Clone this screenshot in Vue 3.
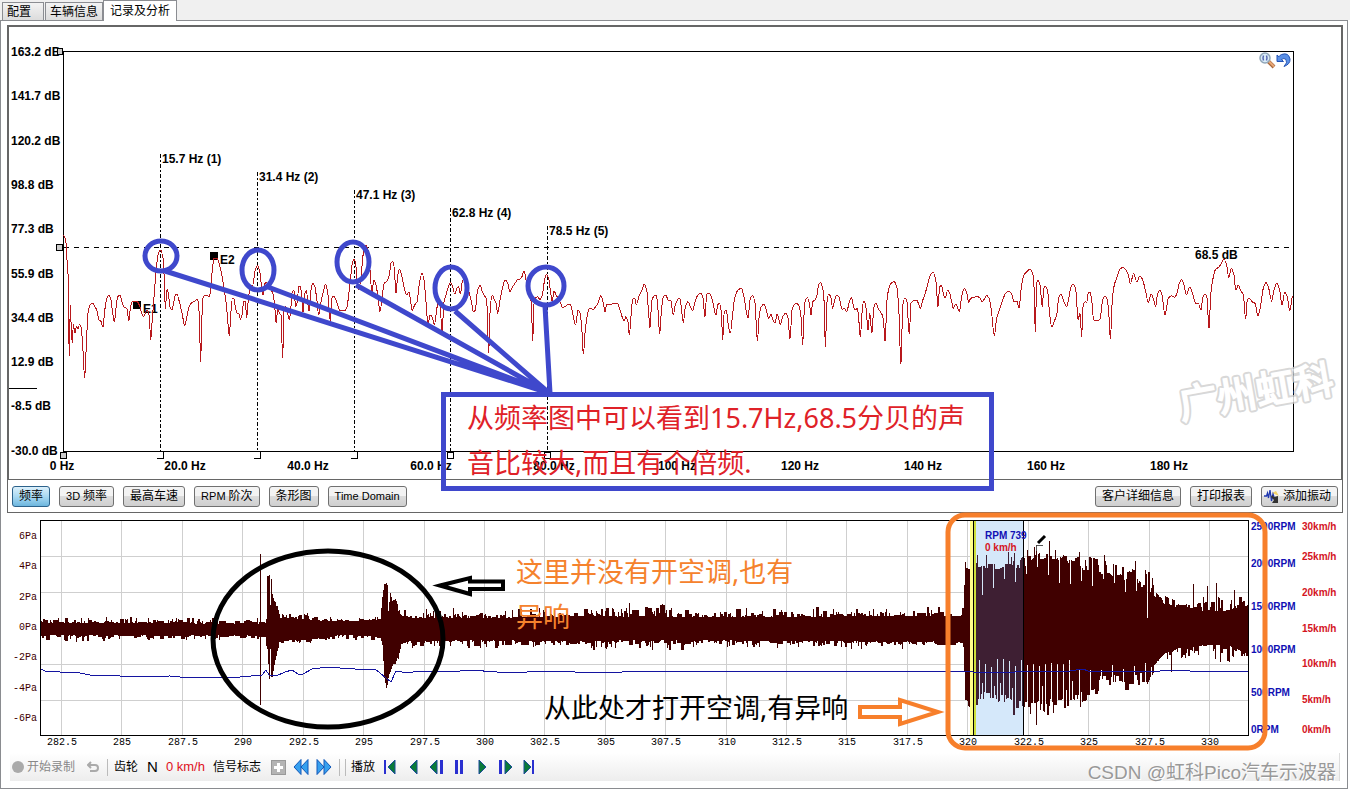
<script setup>
import { ref } from 'vue'

const tabs = ['配置', '车辆信息', '记录及分析']
const activeTab = ref(2)

const modes = [
  [{ t: '频率' }],
  [{ t: '3D', latin: true }, { t: '频率' }],
  [{ t: '最高车速' }],
  [{ t: 'RPM', latin: true }, { t: '阶次' }],
  [{ t: '条形图' }],
  [{ t: 'Time Domain', latin: true }],
]
const activeMode = ref(0)

const dbLabels = ['163.2', '141.7', '120.2', '98.8', '77.3', '55.9', '34.4', '12.9', '-8.5', '-30.0']
  .map((v, i) => ({ text: v + ' dB', y: Math.round(56 + i * 44.3) }))
const hzLabels = ['0', '20.0', '40.0', '60.0', '80.0', '100', '120', '140', '160', '180']
  .map((v, i) => ({ text: v + ' Hz', x: 62 + i * 123 }))
const harmonics = [
  { x: 160, y: 154, text: '15.7 Hz (1)' },
  { x: 257, y: 172, text: '31.4 Hz (2)' },
  { x: 354, y: 190, text: '47.1 Hz (3)' },
  { x: 450, y: 208, text: '62.8 Hz (4)' },
  { x: 547, y: 226, text: '78.5 Hz (5)' },
]

/* Spectrum samples: each block has an origin, samples are in thirds of a unit. */
const spectrum = [
  { x: 0, y: 230, d: '190,15 197,30 201,90 205,150 206,280 208,380 211,225 214,300 217,340 220,283 225,310 229,290 234,297 238,284 243,292 248,345 254,443 259,345 264,250 270,225 277,219 285,230 291,243 297,270 303,274 309,292 313,255 318,215 326,196 332,205 337,240 343,275 348,235 353,200 360,196 366,215 373,233 380,235 387,272 391,235 397,215 410,213 418,225 424,245 430,260 436,250 443,240 448,260 452,329 457,265 463,190 468,125 475,72 482,60 489,85 493,150 496,236 501,178 505,190 510,230 515,240 520,225 526,195 531,193 538,215 544,240 550,270 554,288 560,262 567,232 575,218 583,215 592,208 596,225 599,300 602,395 605,280 609,205 616,195 628,200 632,180 637,120 642,85 650,85 660,110 668,150 676,200 682,255 688,317 692,255 697,205 702,205 706,230 712,250 717,250 721,268 727,250 731,213 736,215 740,262 745,210 752,165 758,165 766,120 773,105 780,130 784,165 789,195 795,160 800,158 808,170 820,195 825,240 828,280 834,230 838,250 843,255 848,385 852,240 857,228 862,245 868,270 872,240 877,185 882,182 887,230 892,215 896,170 901,168 905,200 909,250 914,190 919,182 927,245 933,180 938,160 944,168 950,205 956,255 963,215 970,185 977,163 984,195 991,275 996,205 1001,198 1008,210 1018,240' },
  { x: 340, y: 220, d: '0,272 12,272 20,265 25,235 30,190 37,130 42,118 47,130 50,170 56,210 63,170 70,100 78,75 84,90 90,150 96,220 101,180 108,195 115,240 120,275 127,225 133,190 140,185 148,165 153,130 158,125 163,145 168,222 173,165 179,148 186,170 193,205 200,225 207,215 212,245 216,272 224,255 231,245 239,185 246,160 252,180 258,245 264,315 270,285 276,290 283,315 290,270 295,240 300,250 306,335 312,245 318,225 325,200 332,187 338,200 344,222 351,205 356,200 361,222 367,185 373,175 380,200 388,220 395,250 400,275 406,270 412,215 421,196 427,215 434,228 440,240 446,400 451,260 457,225 463,240 468,250 473,280 480,240 487,205 496,180 503,190 510,215 518,200 525,190 532,180 538,178 545,172 552,152 557,175 562,210 568,230 574,245 578,362 583,240 592,230 600,238 607,225 613,185 619,163 626,175 632,220 637,245 642,212 648,225 658,240 668,262 676,260 684,252 692,255 699,285 707,315 714,270 720,278 725,320 730,403 736,330 744,275 750,265 760,268 768,258 774,250 782,227 790,250 795,275 800,254 815,252 833,250 840,270 848,295 853,303 857,290 864,305 868,345 873,290 878,238 884,235 889,255 894,240 898,225 904,215 913,193 920,210 925,265 930,325 935,245 942,228 949,225 954,270 959,343 964,275 970,232 977,225 985,240 992,240 1000,285 1007,250 1018,235' },
  { x: 680, y: 220, d: '0,235 5,275 10,307 16,262 24,245 31,260 38,272 45,245 52,228 62,220 69,235 75,292 80,222 89,220 97,240 102,265 108,285 113,255 118,250 124,275 128,360 133,275 139,272 145,315 151,340 157,290 164,235 174,210 184,205 192,230 198,270 204,295 210,240 218,226 225,250 232,363 238,285 244,260 251,253 259,270 266,295 273,283 279,300 285,310 291,283 296,295 301,314 308,290 317,280 324,295 330,358 336,270 342,255 350,250 358,260 363,290 368,375 374,250 382,233 388,248 393,285 398,245 405,240 410,230 416,195 422,187 428,205 433,255 436,382 441,245 446,222 452,230 458,265 463,245 470,225 477,230 486,268 493,265 500,275 507,250 514,232 520,255 525,270 532,265 536,295 541,352 546,280 551,243 556,250 560,285 564,333 569,280 576,340 581,265 588,250 596,268 607,285 611,310 615,367 621,240 628,200 635,188 642,185 650,200 656,260 663,436 668,260 674,235 680,240 688,343 693,250 700,243 710,240 715,250 721,265 727,245 737,215 748,175 754,160 760,157 768,185 774,262 779,200 784,197 789,215 795,235 803,211 809,220 815,245 820,265 828,252 838,275 845,230 853,205 861,222 866,247 872,235 890,230 898,232 906,245 914,235 920,226 927,235 934,270 943,348 950,295 960,265 970,235 978,218 987,213' },
  { x: 1010, y: 220, d: '6,225 12,245 21,243 27,265 33,210 40,170 50,155 60,148 68,160 72,200 76,337 80,190 84,180 90,195 97,262 101,205 107,199 113,215 119,285 126,322 132,305 140,285 147,230 153,223 160,240 170,260 177,230 184,198 191,193 198,215 204,300 210,280 215,350 219,260 226,245 230,248 235,220 240,217 245,240 251,300 262,301 270,298 278,240 285,229 292,240 297,290 301,358 307,240 313,195 320,175 330,148 338,142 348,150 355,165 361,192 371,160 380,185 390,168 398,180 407,215 415,248 423,223 430,235 437,260 443,220 449,211 456,225 465,284 475,235 484,227 494,232 501,220 508,190 515,178 522,195 529,225 539,202 547,218 557,250 565,250 573,270 578,235 585,222 591,235 597,328 602,225 608,180 616,150 628,140 642,118 650,135 656,172 664,145 672,165 677,210 685,196 691,210 700,225 707,298 712,240 718,235 726,245 735,250 744,287 752,255 760,205 768,188 776,205 785,244 792,210 801,190 809,210 816,255 824,217 832,230 839,272 848,228' },
]
/* Monotone cubic through the samples: flat tangents on peaks and troughs. */
const spectrumPath = (() => {
  const pts = spectrum.flatMap(b => b.d.split(' ').map(p => {
    const [x, y] = p.split(',').map(Number)
    return [b.x + x / 3, b.y + y / 3]
  }))
  const slope = i => (pts[i + 1][1] - pts[i][1]) / (pts[i + 1][0] - pts[i][0])
  const tangent = pts.map((_, i) => {
    if (i === 0 || i === pts.length - 1) return 0
    const a = slope(i - 1)
    const b = slope(i)
    return a * b <= 0 ? 0 : (2 * a * b) / (a + b)
  })
  let d = `M${pts[0][0].toFixed(1)} ${pts[0][1].toFixed(1)}`
  for (let i = 1; i < pts.length; i++) {
    const [x0, y0] = pts[i - 1]
    const [x1, y1] = pts[i]
    const h = (x1 - x0) / 3
    d += `C${[x0 + h, y0 + tangent[i - 1] * h, x1 - h, y1 - tangent[i] * h, x1, y1].map(n => n.toFixed(1)).join(' ')}`
  }
  return d
})()

const paLabels = [6, 4, 2, 0, -2, -4, -6].map((v, i) => ({ text: v + 'Pa', y: Math.round(539 + i * 30.3) }))
const timeTicks = Array.from({ length: 20 }, (_, i) => ({ text: String(282.5 + i * 2.5), x: Math.round(61 + i * 60.42) }))
const rpmLabels = [['2500', 530], ['2000', 567], ['1500', 610], ['1000', 653], ['500', 696], ['0', 733]]
const speedLabels = [['30', 530], ['25', 560], ['20', 596], ['15', 632], ['10', 667], ['5', 703], ['0', 733]]

/* Envelope keys: x, top, bottom, jitter top, jitter bottom */
const envelope = [
  [41, 621, 636, 5, 4], [90, 621, 636, 6, 6], [130, 621, 636, 5, 4], [258, 622, 636, 5, 4], [265, 622, 637, 3, 3],
  [266, 618, 646, 2, 2], [267, 576, 648, 1, 1], [269, 575, 678, 1, 2], [270, 606, 648, 1, 1], [271, 580, 677, 1, 2], [272, 594, 676, 1, 3],
  [274, 600, 664, 3, 3], [277, 607, 651, 3, 2], [279, 616, 641, 4, 3],
  [305, 617, 640, 6, 5], [320, 619, 638, 5, 4], [345, 620, 635, 4, 4], [380, 619, 637, 3, 3], [382, 597, 645, 1, 2],
  [384, 583, 678, 2, 4], [387, 584, 686, 3, 4], [388, 610, 678, 2, 3], [390, 592, 670, 4, 2], [392, 600, 664, 4, 3], [395, 598, 664, 4, 4],
  [398, 610, 655, 5, 3], [401, 614, 644, 4, 3], [410, 615, 642, 8, 6], [500, 615, 642, 7, 7], [600, 613, 643, 8, 7],
  [616, 611, 644, 14, 13], [645, 612, 644, 14, 11], [690, 614, 642, 8, 7], [963, 613, 643, 8, 6],
  [965, 566, 698, 6, 6], [972, 568, 704, 6, 8],
  [976, 564, 698, 10, 20], [1000, 564, 700, 14, 20], [1023, 562, 708, 14, 20], [1036, 555, 707, 14, 18], [1046, 553, 704, 12, 16],
  [1062, 556, 702, 12, 14], [1080, 563, 697, 16, 14], [1096, 566, 692, 14, 12], [1100, 567, 679, 16, 12], [1122, 574, 678, 14, 14], [1147, 581, 678, 20, 18],
  [1153, 590, 668, 18, 14], [1165, 599, 658, 14, 18], [1180, 605, 653, 8, 16], [1195, 605, 651, 14, 14], [1207, 604, 651, 18, 18], [1225, 606, 649, 14, 16], [1248, 602, 658, 10, 14],
]
let seed = 7
const rnd = () => {
  seed = (seed * 16807) % 2147483647
  return seed / 2147483647
}
const waveColumns = (() => {
  const out = []
  let k = 0
  let up = 0
  let down = 0
  for (let x = 41; x < 1248; x++) {
    while (k < envelope.length - 2 && x >= envelope[k + 1][0]) k++
    const a = envelope[k]
    const b = envelope[k + 1]
    const t = (x - a[0]) / (b[0] - a[0])
    const mix = i => a[i] + (b[i] - a[i]) * t
    if (rnd() > 0.45) up = 0.4 - rnd() * rnd() * 1.4
    if (rnd() > 0.45) down = rnd() * rnd() * 1.4 - 0.4
    let top = mix(1) + up * mix(3)
    let bottom = mix(2) + down * mix(4) + 1
    if (x > 978 && x < 1074 && x % 6 === 1) bottom = 658 + rnd() * 10
    if (x > 978 && x < 1074 && x % 6 === 4 && rnd() > 0.5) bottom = 680 + rnd() * 12
    if (x > 1078 && x < 1150 && x % 11 === 1) bottom = 662 + rnd() * 8
    if (x > 976 && x < 1156 && x % 11 === 3) top += 10 + rnd() * 20
    out.push({ x, top: Math.round(top), bottom: Math.round(bottom) })
  }
  return out
})()
const columnsPath = list => list.map(c => `M${c.x + 0.5} ${c.top}V${c.bottom}`).join('')
const wavePath = columnsPath(waveColumns.filter(c => c.x < 970 || c.x > 1023)) + 'M260 554V705M1049.5 541V600M1036.5 545V600M1055.5 550V600M1135.5 561V600M1149.5 572V600M1193.5 584V620M1207.5 586V620M1216.5 583V620M1234.5 590V620M386.5 583V688M971.5 566V700'
const selectedPath = columnsPath(waveColumns.filter(c => c.x >= 976 && c.x <= 1022)) + 'M1008.5 552V600M1014.5 553V600M986.5 555V600'

const rpmLine = '41,669 45,671 60,672 70,672 80,673 90,675 110,675 130,677 170,676 180,677 240,677 262,675 266,670 269,675 276,676 285,672 292,670 298,674 303,674 312,669 320,668 330,667 340,668 370,670 375,669 391,682 396,671 408,673 418,671 450,672 470,670 510,673 545,671 605,673 640,671 680,671 735,672 755,671 785,671 840,671 970,671 976,673 985,672 1000,673 1030,671 1070,671 1083,669 1088,671 1160,671 1180,670 1190,671 1249,671'

const transport = [
  { label: '跳到开头', bars: [2], tri: '13,2 6,9 13,16' },
  { label: '倒放', bars: [], tri: '12,2 5,9 12,16' },
  { label: '后退一步', bars: [12], tri: '9,2 2,9 9,16' },
  { label: '暂停', bars: [4, 9], tri: '' },
  { label: '正放', bars: [], tri: '5,2 12,9 5,16' },
  { label: '前进一步', bars: [2], tri: '8,2 15,9 8,16' },
  { label: '跳到末尾', bars: [12], tri: '4,2 11,9 4,16' },
]
</script>

<template>
  <div class="app">
    <nav class="tabs" role="tablist">
      <button v-for="(t, i) in tabs" :key="t" role="tab" class="tab" :class="{ active: i === activeTab }"
        :aria-selected="i === activeTab" @click="activeTab = i">{{ t }}</button>
    </nav>

    <main class="page">
      <section class="panel">
        <div class="chart-frame">
          <svg class="chart freq" viewBox="9 27 1332 452">
            <g class="axis">
              <text v-for="l in dbLabels" :key="l.text" x="11" :y="l.y">{{ l.text }}</text>
              <text v-for="l in hzLabels" :key="l.text" :x="l.x" y="470" text-anchor="middle">{{ l.text }}</text>
              <text v-for="h in harmonics" :key="h.text" :x="h.x + 2" :y="h.y + 9">{{ h.text }}</text>
            </g>
            <g class="crisp">
              <rect x="63.5" y="51.5" width="1230" height="400" fill="none" stroke="#000" />
              <path d="M9 388.5H37" stroke="#000" />
              <path d="M64 247.5H1289" stroke="#000" stroke-dasharray="5 5" />
              <path v-for="h in harmonics" :key="h.x" :d="`M${h.x + 0.5} ${h.y}V451`" stroke="#000" stroke-dasharray="4 2 2 2" />
              <path v-for="h in harmonics.slice(0, 3)" :key="h.x" :d="`M${h.x - 3} 458.5H${h.x + 3.5}V452`" fill="none" stroke="#000" />
              <rect v-for="h in harmonics.slice(3)" :key="h.x" :x="h.x - 2.5" y="452.5" width="6" height="6" fill="#fff" stroke="#000" />
              <rect x="57.5" y="48.5" width="5" height="6" fill="#ccc" stroke="#000" />
              <rect x="56.5" y="244.5" width="6" height="6" fill="#ccc" stroke="#000" />
              <rect x="60.5" y="452.5" width="6" height="6" fill="#ccc" stroke="#000" />
              <rect x="133" y="301" width="8" height="8" />
              <rect x="210" y="252" width="8" height="8" />
            </g>
            <g class="axis">
              <text x="143" y="313">E1</text>
              <text x="220" y="264">E2</text>
              <text x="1195" y="259">68.5 dB</text>
            </g>
            <path class="spectrum crisp" :d="spectrumPath" />
            <g class="brand" transform="rotate(-10 1256 392)">
              <text class="brand-edge" x="1178" y="406">广州虹科</text>
              <text class="brand-fill" x="1178" y="406">广州虹科</text>
            </g>
            <g class="note-blue">
              <ellipse cx="161" cy="256" rx="16" ry="15" />
              <ellipse cx="258" cy="270" rx="16" ry="20" />
              <ellipse cx="353" cy="262" rx="16" ry="20" />
              <ellipse cx="451" cy="288" rx="16" ry="21" />
              <ellipse cx="546" cy="286" rx="18" ry="19" />
              <path d="M165 271L549 393M268 287L549 393M356 285L549 393M455 311L549 393M545 306L550 393" />
              <rect x="443.5" y="394.5" width="548" height="94" />
            </g>
            <g class="note red">
              <text x="467" y="428">从频率图中可以看到15.7Hz,68.5分贝的声</text>
              <text x="467" y="473">音比较大,而且有个倍频.</text>
            </g>
          </svg>
          <div class="chart-tools">
            <button class="icon-btn" aria-label="缩放">
              <svg width="17" height="17" viewBox="0 0 17 17">
                <path d="M9.500 9.500L15 15" stroke="#a9673c" stroke-width="4" />
                <path d="M9.500 9L15 14.500" stroke="#e8a877" stroke-width="2" />
                <circle cx="6" cy="6" r="5" fill="#d9ecf8" stroke="#8fa5b8" stroke-width="1.500" />
                <path d="M4.500 3.500Q3.500 6 4.500 8.500M7.500 3.500Q8.500 6 7.500 8.500" fill="none" stroke="#5868b0" stroke-width="1.500" />
              </svg>
            </button>
            <button class="icon-btn" aria-label="撤销">
              <svg width="15" height="17" viewBox="0 0 15 17">
                <path d="M1 3V9.500H7.500L5.500 7.500Q8 5.500 10 7.500Q12 10.500 8 14.500Q14.500 12 14 7Q12.500 0 5.500 2.500Q4 3 3 4.800Z" fill="#5a8fe6" stroke="#2453b4" />
              </svg>
            </button>
          </div>
        </div>
        <div class="mode-row">
          <div class="group">
            <button v-for="(m, i) in modes" :key="i" class="btn" :class="{ on: i === activeMode }" @click="activeMode = i">
              <span v-for="p in m" :key="p.t" :class="{ latin: p.latin }">{{ p.t }}</span>
            </button>
          </div>
          <div class="group">
            <button class="btn">客户详细信息</button>
            <button class="btn">打印报表</button>
            <button class="btn add">
              <svg width="16" height="15" viewBox="0 0 16 15">
                <path d="M8 4L12 2L15 7Z" fill="#f3d36a" />
                <path d="M0 7H2.500L3.500 4L4.500 9L6 1L7.500 12L9 5L10 8" fill="none" stroke="#2038b0" stroke-width="1.300" />
                <path d="M8 6L10 8L14 7V14H8L10 11L7 8Z" fill="#333" />
              </svg>
              <span>添加振动</span>
            </button>
          </div>
        </div>
      </section>

      <svg class="chart time" viewBox="7 513 1336 237">
        <g class="crisp">
          <path v-for="t in timeTicks" :key="t.x" :d="`M${t.x + 0.5} 521V735`" stroke="#cfcfcf" />
          <path d="M41 556.500H1248M41 592.500H1248M41 628.500H1248M41 664.500H1248M41 700.500H1248" stroke="#cfcfcf" />
          <rect x="976" y="521" width="47" height="214" fill="#d5e8fa" />
          <path :d="wavePath" stroke="#400000" />
          <path :d="selectedPath" stroke="#3e1f33" />
          <rect x="970" y="521" width="3" height="214" fill="#ffff8c" />
          <rect x="974" y="521" width="2" height="214" fill="#cfe03a" />
          <path d="M973.500 521V735M1023.500 521V735" stroke="#000" />
          <polyline :points="rpmLine" fill="none" stroke="#1414a0" />
          <rect x="40.500" y="520.500" width="1208" height="215" fill="none" stroke="#000" />
        </g>
        <g class="mono">
          <text v-for="l in paLabels" :key="l.text" x="37" :y="l.y" text-anchor="end" class="pa">{{ l.text }}</text>
          <text v-for="t in timeTicks" :key="t.text" :x="t.x + 1" y="745" text-anchor="middle">{{ t.text }}</text>
        </g>
        <g class="scale">
          <text v-for="l in rpmLabels" :key="l[0]" x="1251" :y="l[1]" class="rpm">{{ l[0] }}RPM</text>
          <text v-for="l in speedLabels" :key="l[0]" x="1302" :y="l[1]" class="speed">{{ l[0] }}km/h</text>
          <text x="985" y="539" class="rpm">RPM 739</text>
          <text x="985" y="551" class="speed">0 km/h</text>
        </g>
        <path d="M1038 543L1045 536" stroke="#000" stroke-width="3" />
        <path d="M1036.500 551V545.500H1043" fill="none" stroke="#555" />
        <g fill="none" stroke-width="5">
          <ellipse cx="328" cy="639" rx="115" ry="88" stroke="#000" />
          <rect x="948" y="515" width="317" height="233" rx="17" stroke="#f77f2b" />
        </g>
        <g fill="none" stroke-width="4">
          <path d="M440 585.500L470 578V581.500H503V589H470V594Z" stroke="#000" />
          <path d="M860 707H900V700L938 712L900 724V717H860Z" stroke="#f77f2b" />
        </g>
        <g class="note">
          <g class="orange">
            <text x="516" y="582">这里并没有开空调,也有</text>
            <text x="516" y="627">异响</text>
          </g>
          <text x="544" y="718">从此处才打开空调,有异响</text>
        </g>
      </svg>

      <footer class="toolbar">
        <button class="tool muted" disabled><i class="dot"></i>开始录制</button>
        <button class="tool undo" disabled aria-label="撤销">
          <svg width="12" height="12" viewBox="0 0 12 12"><path d="M4 1L1 4L4 7M1 4H8Q11 4 11 7Q11 10 8 10H3" fill="none" stroke="#aaa" stroke-width="2" /></svg>
        </button>
        <i class="sep"></i>
        <span class="gear">齿轮</span>
        <span class="gear-value">N</span>
        <span class="speed-value">0 km/h</span>
        <span class="flag">信号标志</span>
        <button class="tool plus" aria-label="添加标志">
          <svg width="15" height="15" viewBox="0 0 15 15"><rect x=".5" y=".5" width="14" height="14" fill="#b4b4b4" stroke="#999" /><path d="M7.500 3V12M3 7.500H12" stroke="#fff" stroke-width="3" /></svg>
        </button>
        <button class="tool rew" aria-label="上一个标志">
          <svg width="16" height="18" viewBox="0 0 16 18"><path d="M8 1.500V16.500L1 9ZM15 1.500V16.500L8 9Z" fill="#37a0ee" stroke="#1257b8" /></svg>
        </button>
        <button class="tool ffw" aria-label="下一个标志">
          <svg width="16" height="18" viewBox="0 0 16 18"><path d="M1 1.500V16.500L8 9ZM8 1.500V16.500L15 9Z" fill="#37a0ee" stroke="#1257b8" /></svg>
        </button>
        <i class="sep"></i>
        <i class="sep second"></i>
        <span class="play">播放</span>
        <div class="transport">
          <button v-for="b in transport" :key="b.label" class="tool" :aria-label="b.label">
            <svg width="17" height="18" viewBox="0 0 17 18">
              <polygon v-if="b.tri" :points="b.tri" fill="#0a7a3a" stroke="#1c4a9a" />
              <rect v-for="x in b.bars" :key="x" :x="x" y="2" :width="b.label.startsWith('跳到') ? 2 : 3" height="14" fill="#2a30d0" />
            </svg>
          </button>
        </div>
        <span class="credit">CSDN @虹科Pico汽车示波器</span>
      </footer>
    </main>
  </div>
</template>

<style>
body {
  background: #fff;
}
</style>

<style scoped>
.app {
  font: 12px/16px "Liberation Sans", "Noto Sans CJK SC", sans-serif;
  color: #000;
}
button {
  font: inherit;
  color: inherit;
  margin: 0;
}
.tabs {
  display: flex;
  align-items: flex-end;
  height: 20px;
  padding-left: 2px;
  background: #f0f0f0;
}
.tab {
  height: 18px;
  padding: 0 4px;
  border: 1px solid #8b8d92;
  border-bottom: 0;
  background: linear-gradient(#f3f3f3, #dcdcdc);
  white-space: nowrap;
}
.tab:first-child {
  padding-right: 12px;
  margin-right: 1px;
}
.tab.active {
  position: relative;
  height: 21px;
  padding: 0 6px;
  margin-bottom: -1px;
  background: #fff;
}
.page {
  margin: 0 2px 1px 0;
  padding: 4px 4px 7px 6px;
  border: 1px solid #8a8c90;
}
.panel {
  border: 1px solid #666;
}
.chart-frame {
  position: relative;
  border: 1px solid #666;
}
.chart {
  display: block;
  width: 100%;
  height: auto;
  overflow: visible;
}
.chart.freq {
  position: relative;
  z-index: 1;
  pointer-events: none;
}
.chart-tools {
  position: absolute;
  z-index: 2;
  top: 25px;
  right: 50px;
  display: flex;
}
.icon-btn,
.tool {
  display: flex;
  align-items: center;
  padding: 0;
  border: 0;
  background: none;
}
.crisp {
  shape-rendering: crispEdges;
}
.axis {
  font-size: 12px;
  font-weight: bold;
}
.spectrum {
  fill: none;
  stroke: #b8181c;
  stroke-width: 1;
}
.brand {
  font: 39px "Noto Sans CJK SC", sans-serif;
  opacity: 0.8;
}
.brand-edge {
  fill: none;
  stroke: #cfcfcf;
  stroke-width: 6;
  stroke-linejoin: round;
}
.brand-fill {
  fill: #fff;
  stroke: #fff;
  stroke-width: 2;
}
.note-blue {
  fill: none;
  stroke: #3f48cc;
  stroke-width: 5;
}
.note {
  font: 27px "Noto Sans", "Noto Sans CJK SC", sans-serif;
  fill: #000;
}
.note.red {
  fill: #df2128;
}
.orange {
  fill: #f5822d;
}
.mode-row {
  display: flex;
  justify-content: space-between;
  align-items: center;
  height: 32px;
  padding: 0 4px;
}
.group {
  display: flex;
  gap: 9px;
}
.btn {
  display: flex;
  align-items: center;
  gap: 3px;
  height: 21px;
  padding: 0 6px;
  border: 1px solid #707070;
  border-radius: 3px;
  background: linear-gradient(#f3f3f3 45%, #dcdcdc 50%, #cfcfcf);
  white-space: nowrap;
}
.btn.add {
  padding: 0 6px 0 2px;
}
.btn.on {
  border-color: #2c628b;
  background: linear-gradient(#dcf0fb, #a9d9f2 50%, #6db6de);
}
.latin {
  font-size: 11px;
}
.mono {
  font: 10px "Liberation Mono", monospace;
}
.pa {
  fill: #400000;
}
.scale {
  font: bold 10px "Liberation Sans", sans-serif;
}
.rpm {
  fill: #1010b4;
}
.speed {
  fill: #d4141e;
}
.toolbar {
  position: relative;
  display: flex;
  align-items: center;
  height: 28px;
  margin: 3px 3px 0;
  padding: 0 2px;
  border-right: 1px solid #ddd;
  background: linear-gradient(#fff, #ededed);
  white-space: nowrap;
}
.muted {
  color: #888;
}
.dot {
  width: 12px;
  height: 12px;
  margin-right: 3px;
  border-radius: 50%;
  background: #aaa;
}
.undo {
  margin: 0 8px 0 12px;
}
.sep {
  width: 1px;
  height: 17px;
  background: #bbb;
}
.sep.second {
  margin-left: 5px;
}
.gear {
  margin: 0 9px 0 6px;
}
.gear-value {
  font-size: 15px;
}
.speed-value {
  margin: 0 8px;
  font-size: 13px;
  color: #e01020;
}
.plus {
  margin-left: 10px;
}
.rew,
.ffw {
  margin-left: 7px;
}
.ffw {
  margin-right: 7px;
}
.play {
  margin: 0 7px 0 5px;
}
.transport {
  display: flex;
  gap: 6px;
}
.credit {
  position: absolute;
  top: 7px;
  right: 3px;
  font: 19px/26px "Liberation Sans", "Noto Sans CJK SC", sans-serif;
  color: #999;
  text-shadow: 1px 1px 0 #fff;
}
</style>
